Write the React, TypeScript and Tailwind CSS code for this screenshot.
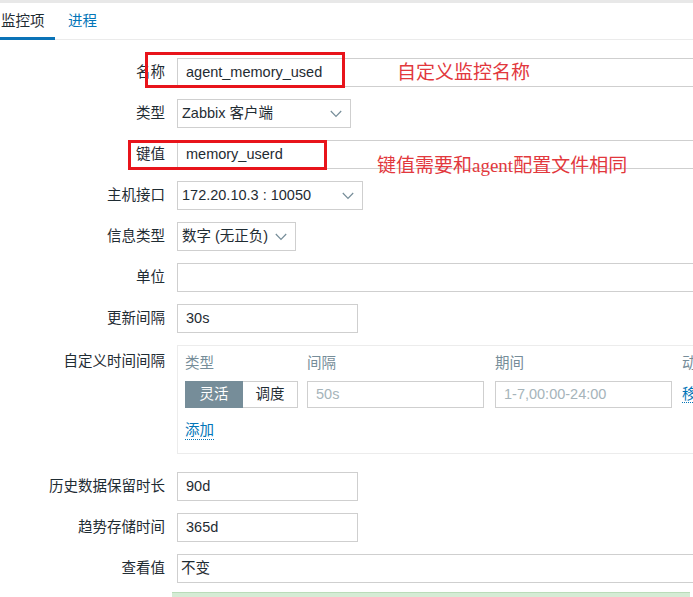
import React from "react";

const Chevron = () => (
  <svg width="12" height="8" viewBox="0 0 12 8" className="shrink-0">
    <path d="M0.8 1 L6 6.4 L11.2 1" fill="none" stroke="#768d99" strokeWidth="1.2" />
  </svg>
);

const Label = ({ children, top = false }: { children: React.ReactNode; top?: boolean }) => (
  <div className={top ? "flex h-[29px] items-center justify-end pt-[5px]" : "flex h-[29px] items-center justify-end"}>
    {children}
  </div>
);

const TextBox = ({ value, className = "" }: { value?: string; className?: string }) => (
  <div className={`flex h-[29px] items-center border border-[#cfcfcf] bg-white px-[8px] ${className}`}>{value}</div>
);

const SelectBox = ({ value, className = "" }: { value: string; className?: string }) => (
  <div className={`flex h-[29px] items-center justify-between border border-[#cfcfcf] bg-white pl-[4px] pr-[8px] ${className}`}>
    <span>{value}</span>
    <Chevron />
  </div>
);

export default function App() {
  return (
    <div className="relative h-[597px] w-[693px] overflow-hidden bg-white font-['Liberation_Sans','Noto_Sans_CJK_SC',sans-serif] text-[14.5px] text-[#1f2c33]">
      {/* tabs */}
      <div className="h-[3px] bg-[#e8e8e8]" />
      <div className="flex h-[37px] border-b border-[#ebebeb]">
        <div className="-mb-px flex w-[55px] items-center border-b-[3px] border-[#0a73b7] pl-[1px] pt-[3px]">监控项</div>
        <div className="ml-[13px] flex items-center pt-[1px] text-[#0275b8]">进程</div>
      </div>

      {/* form */}
      <div className="grid grid-cols-[165px_1fr] gap-x-[12px] gap-y-[12px] pr-[3px] pt-[18px]">
        <Label>名称</Label>
        <TextBox value="agent_memory_used" />

        <Label>类型</Label>
        <SelectBox value="Zabbix 客户端" className="w-[174px]" />

        <Label>键值</Label>
        <TextBox value="memory_userd" />

        <Label>主机接口</Label>
        <SelectBox value="172.20.10.3 : 10050" className="w-[186px]" />

        <Label>信息类型</Label>
        <SelectBox value="数字 (无正负)" className="w-[119px]" />

        <Label>单位</Label>
        <TextBox />

        <Label>更新间隔</Label>
        <TextBox value="30s" className="w-[181px]" />

        <Label top>自定义时间间隔</Label>
        <div className="-mr-[3px] mb-[6px] h-[109px] border border-r-0 border-[#ececec] px-[7px] pt-[8px]">
          <div className="grid grid-cols-[122px_188px_187px_auto] whitespace-nowrap">
            <div className="h-[18px] leading-[18px] text-[#768d99]">类型</div>
            <div className="h-[18px] leading-[18px] text-[#768d99]">间隔</div>
            <div className="h-[18px] leading-[18px] text-[#768d99]">期间</div>
            <div className="h-[18px] leading-[18px] text-[#768d99]">动作</div>

            <div className="mt-[9px] flex h-[27px] w-[113px]">
              <div className="flex w-[58px] items-center justify-center border border-[#768d99] bg-[#768d99] text-white">灵活</div>
              <div className="flex w-[55px] items-center justify-center border border-l-0 border-[#cfcfcf] bg-white">调度</div>
            </div>
            <div className="mt-[9px] flex h-[27px] w-[177px] items-center border border-[#cfcfcf] px-[8px] text-[#a6b4ba]">50s</div>
            <div className="mt-[9px] flex h-[27px] w-[177px] items-center border border-[#cfcfcf] px-[8px] text-[#a6b4ba]">1-7,00:00-24:00</div>
            <div className="mt-[9px] flex h-[27px] items-center">
              <span className="border-b border-dotted border-[#0275b8] leading-[16px] text-[#0275b8]">移除</span>
            </div>
          </div>
          <div className="mt-[14px] flex">
            <span className="border-b border-dotted border-[#0275b8] leading-[17px] text-[#0275b8]">添加</span>
          </div>
        </div>

        <Label>历史数据保留时长</Label>
        <TextBox value="90d" className="w-[181px]" />

        <Label>趋势存储时间</Label>
        <TextBox value="365d" className="w-[181px]" />

        <Label>查看值</Label>
        <div className="flex h-[29px] items-center border border-[#cfcfcf] bg-white pl-[3px]">不变</div>
      </div>

      <div className="ml-[172px] mr-[3px] mt-[9px] h-[10px] border-t border-[#b9dcb9] bg-[#d5ecd5]" />

      {/* annotations */}
      <div className="absolute left-[145px] top-[52px] h-[36px] w-[200px] border-[3px] border-[#e8141b]" />
      <div className="absolute left-[128px] top-[140px] h-[30px] w-[199px] border-[3px] border-[#e8141b]" />
      <div className="absolute left-[397px] top-[62px] font-['Liberation_Serif','Noto_Sans_CJK_SC',serif] text-[19px] leading-[22px] text-[#e2383d]">
        自定义监控名称
      </div>
      <div className="absolute left-[377px] top-[155px] font-['Liberation_Serif','Noto_Sans_CJK_SC',serif] text-[19px] leading-[22px] text-[#e2383d]">
        键值需要和agent配置文件相同
      </div>
    </div>
  );
}
